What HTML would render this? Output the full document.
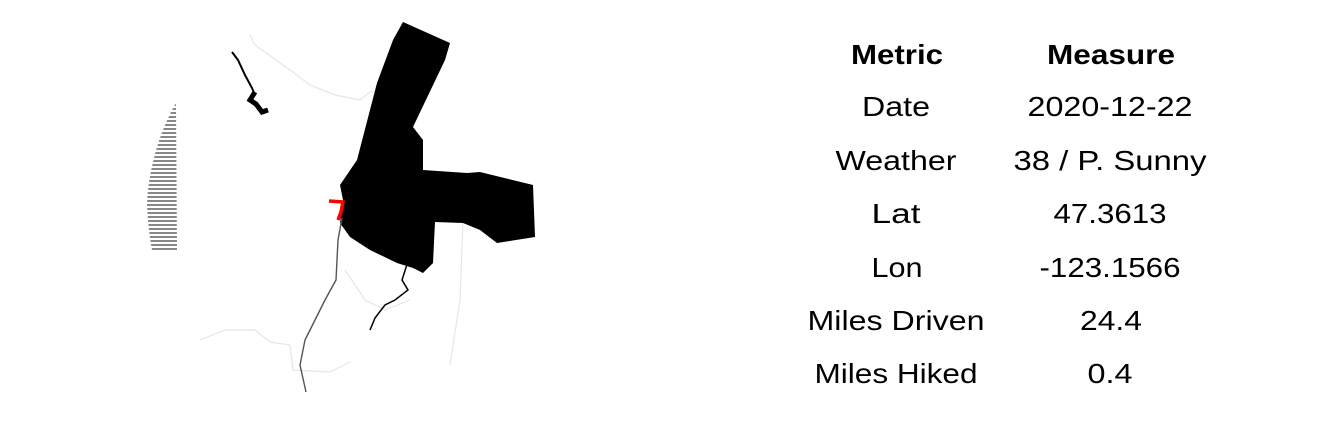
<!DOCTYPE html>
<html><head><style>html,body{margin:0;padding:0;background:#fff;width:1344px;height:422px;overflow:hidden}</style></head>
<body>
<svg width="1344" height="422" xmlns="http://www.w3.org/2000/svg">
<defs><pattern id="h" width="4" height="4" patternUnits="userSpaceOnUse"><rect width="4" height="2" fill="#888"/></pattern></defs>
<path d="M176,103 C160,130 148,170 147,205 C148,225 150,240 152,250 L177,250 Z" fill="url(#h)"/>
<g fill="none" stroke="#e6e6e6" stroke-width="1.2">
<path d="M250,35 L255,45 L290,70 L310,85 L335,95 L360,100 L370,92 L400,88"/>
<path d="M200,340 L225,330 L255,330 L270,342 L290,345 L293,370 L330,372 L350,362"/>
<path d="M463,223 L460,300 L450,365"/>
<path d="M345,270 L365,300 L385,310 L410,300"/>
</g>
<path d="M403,22 L450,43 L445,60 L413,127 L423,140 L423,170 L467,173 L480,172 L533,185 L535,237 L497,243 L480,230 L463,223 L435,222 L433,263 L423,273 L413,268 L397,263 L370,250 L350,237 L340,223 L343,200 L340,185 L357,160 L377,83 L393,40 Z" fill="#000"/>
<path d="M410,255 L402,280 L408,290 L395,300 L385,305 L375,318 L370,330" fill="none" stroke="#000" stroke-width="1.5"/>
<path d="M342,218 L338,240 L336,280 L325,300 L305,340 L300,365 L306,392" fill="none" stroke="#555" stroke-width="1.4"/>
<path d="M232,52 L238,60 L245,75 L252,88 L255,95" fill="none" stroke="#000" stroke-width="2"/>
<path d="M255,92 L250,100 L256,104 L262,112 L268,110" fill="none" stroke="#000" stroke-width="5"/>
<path d="M329,201 L343,202 L341,212 L338,220" fill="none" stroke="#f00" stroke-width="3.5"/>
<g font-family="Liberation Sans, sans-serif" font-size="28" text-anchor="middle" fill="#000" lengthAdjust="spacingAndGlyphs">
<text x="897" y="64" font-weight="bold" textLength="92" lengthAdjust="spacingAndGlyphs">Metric</text><text x="1111" y="64" font-weight="bold" textLength="128" lengthAdjust="spacingAndGlyphs">Measure</text>
<text x="896" y="116" textLength="68" lengthAdjust="spacingAndGlyphs">Date</text><text x="1110" y="116" textLength="165" lengthAdjust="spacingAndGlyphs">2020-12-22</text>
<text x="896" y="170" textLength="121" lengthAdjust="spacingAndGlyphs">Weather</text><text x="1110" y="170" textLength="193" lengthAdjust="spacingAndGlyphs">38 / P. Sunny</text>
<text x="896" y="223" textLength="49" lengthAdjust="spacingAndGlyphs">Lat</text><text x="1110" y="223" textLength="113" lengthAdjust="spacingAndGlyphs">47.3613</text>
<text x="897" y="277" textLength="51" lengthAdjust="spacingAndGlyphs">Lon</text><text x="1110" y="277" textLength="141" lengthAdjust="spacingAndGlyphs">-123.1566</text>
<text x="896" y="330" textLength="177" lengthAdjust="spacingAndGlyphs">Miles Driven</text><text x="1111" y="330" textLength="62" lengthAdjust="spacingAndGlyphs">24.4</text>
<text x="896" y="383" textLength="163" lengthAdjust="spacingAndGlyphs">Miles Hiked</text><text x="1110" y="383" textLength="45" lengthAdjust="spacingAndGlyphs">0.4</text>
</g>
</svg>
</body></html>
